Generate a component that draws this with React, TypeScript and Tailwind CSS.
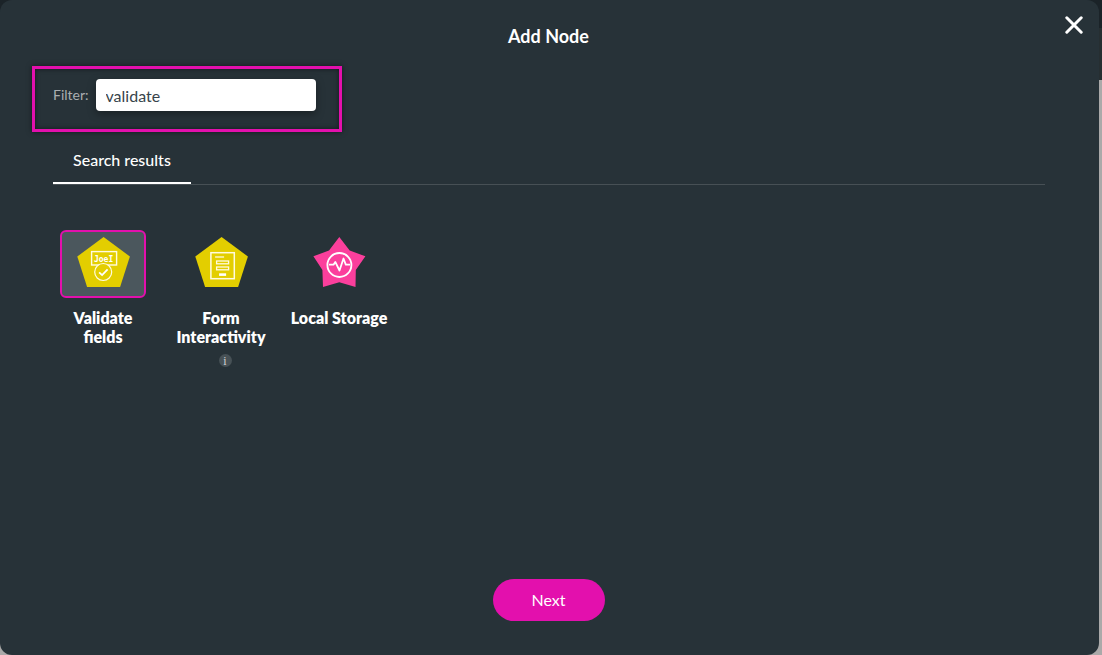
import React, { useState } from 'react';

type NodeType = {
  id: string;
  label: string;
  icon: React.ReactNode;
  hasInfo?: boolean;
};

function ValidateFieldsIcon() {
  return (
    <svg viewBox="-0.6 2 54 54" className="h-[54px] w-[54px]" aria-hidden="true">
      <path d="M27 2 53.3 21.5 43.5 52H10.5L.7 21.5Z" fill="#e3ce00" />
      <rect x="15" y="16.6" width="25" height="13.4" fill="none" stroke="#fffbe0" strokeWidth="1.4" />
      <text x="27" y="26.5" textAnchor="middle" fontFamily="'DejaVu Sans Mono', monospace" fontWeight="bold" fontSize="8" fill="#fff">
        JoeI
      </text>
      <circle cx="26.6" cy="37" r="8.5" fill="#e3ce00" stroke="#fffbe0" strokeWidth="1.2" />
      <path d="m22.5 37.3 3 2.8 5.5-5.8" fill="none" stroke="#fff" strokeWidth="1.8" />
    </svg>
  );
}

function FormIcon() {
  return (
    <svg viewBox="-0.6 2 54 54" className="h-[54px] w-[54px]" aria-hidden="true">
      <path d="M27 2 53.3 21.5 43.5 52H10.5L.7 21.5Z" fill="#e3ce00" />
      <g fill="none" stroke="#fffbe0">
        <rect x="16.3" y="17.7" width="23.4" height="26" strokeWidth="1.5" />
        <path d="M20.5 22h9" strokeWidth="1.3" />
        <rect x="22" y="26" width="12" height="2.8" strokeWidth="1.3" />
        <rect x="22" y="32" width="12" height="2.8" strokeWidth="1.3" />
      </g>
      <rect x="24.5" y="38.3" width="7" height="2.6" fill="#fff" />
    </svg>
  );
}

function LocalStorageIcon() {
  return (
    <svg viewBox="0 2 54 54" className="h-[54px] w-[54px]" aria-hidden="true">
      <path d="m27.3 2 10.4 13.5L53.4 21.3 43.8 35l-.3 17-16.2-4.8L11 52l-.6-17L1.4 21.3l15.6-5.8Z" fill="#fb3f9c" />
      <circle cx="27.4" cy="30" r="12" fill="none" stroke="#fff" strokeWidth="1.8" />
      <path d="M17 29.7h4.5l1.8-2.8 4.2 8.6 4-12 2.3 6.1H38" fill="none" stroke="#fff" strokeWidth="1.8" strokeLinejoin="round" />
    </svg>
  );
}

function CloseIcon() {
  return (
    <svg viewBox="0 0 18 18" className="h-[18px] w-[18px]" aria-hidden="true">
      <path d="M1.8 1.8 16.2 16.2M16.2 1.8 1.8 16.2" stroke="#fff" strokeWidth="3" strokeLinecap="round" />
    </svg>
  );
}

const nodes: NodeType[] = [
  { id: 'validate-fields', label: 'Validate fields', icon: <ValidateFieldsIcon /> },
  { id: 'form-interactivity', label: 'Form Interactivity', icon: <FormIcon />, hasInfo: true },
  { id: 'local-storage', label: 'Local Storage', icon: <LocalStorageIcon /> },
];

export default function App() {
  const [filter, setFilter] = useState('validate');
  const [selected, setSelected] = useState('validate-fields');

  return (
    <div className="flex min-h-screen bg-[linear-gradient(#1b2328_28px,#262e31_28px,#262e31_80px,#aaa9a9_80px)] pr-[3px] font-['Lato',sans-serif]">
      <div role="dialog" aria-labelledby="dialog-title" className="relative flex flex-1 flex-col rounded-xl bg-[#273238] text-white">
        <header className="flex justify-center pt-6 pr-0.5 pb-[18px]">
          <h1 id="dialog-title" className="text-lg leading-6 font-bold">Add Node</h1>
          <button type="button" aria-label="Close" className="absolute top-4 right-4 cursor-pointer">
            <CloseIcon />
          </button>
        </header>

        {/* Filter */}
        <div className="mx-8 flex h-[66px] w-[310px] items-start gap-[7px] border-3 border-[#e310ad] px-[18px] pt-2.5 shadow-[0_0_5px_rgba(0,0,0,0.5),inset_0_0_5px_rgba(0,0,0,0.5)]">
          <label htmlFor="filter" className="text-sm leading-8 text-[#aaaeb0]">Filter:</label>
          <input
            id="filter"
            type="text"
            value={filter}
            onChange={(e) => setFilter(e.target.value)}
            className="h-8 w-[220px] rounded bg-white px-2.5 text-base text-[#37444b] shadow-[0_3px_8px_rgba(0,0,0,0.35)] outline-none"
          />
        </div>

        <main className="flex-1 pt-2 pr-[54px] pl-[53px]">
          {/* Tabs */}
          <div role="tablist" className="flex border-b border-[#475055]">
            <button type="button" role="tab" aria-selected="true" className="border-b-2 border-white px-5 pt-2 pb-2.5 text-base leading-6 font-medium">
              Search results
            </button>
          </div>

          {/* Node list */}
          <div className="flex flex-wrap items-start gap-5 px-px pt-[45px]">
            {nodes.map((node) => (
              <button
                key={node.id}
                type="button"
                aria-pressed={selected === node.id}
                onClick={() => setSelected(node.id)}
                className="flex w-[98px] cursor-pointer flex-col items-center"
              >
                <span
                  className={
                    selected === node.id
                      ? 'flex h-[68px] w-[86px] items-center justify-center rounded-md border-2 border-[#e310ad] bg-[#4b575d]'
                      : 'flex h-[68px] w-[86px] items-center justify-center rounded-md border-2 border-transparent'
                  }
                >
                  {node.icon}
                </span>
                <span className="mt-2.5 text-base leading-[19px] font-extrabold">{node.label}</span>
                {node.hasInfo && (
                  <span className="mt-2 ml-2 flex h-[13px] w-[13px] items-center justify-center rounded-full bg-[#475156] font-['Liberation_Serif',serif] text-xs leading-3 text-[#d0d3d5]">
                    i
                  </span>
                )}
              </button>
            ))}
          </div>
        </main>

        <footer className="flex justify-center pr-0.5 pb-[34px]">
          <button type="button" className="h-[42px] w-28 cursor-pointer rounded-full bg-[#e310ad] text-base">
            Next
          </button>
        </footer>
      </div>
    </div>
  );
}
